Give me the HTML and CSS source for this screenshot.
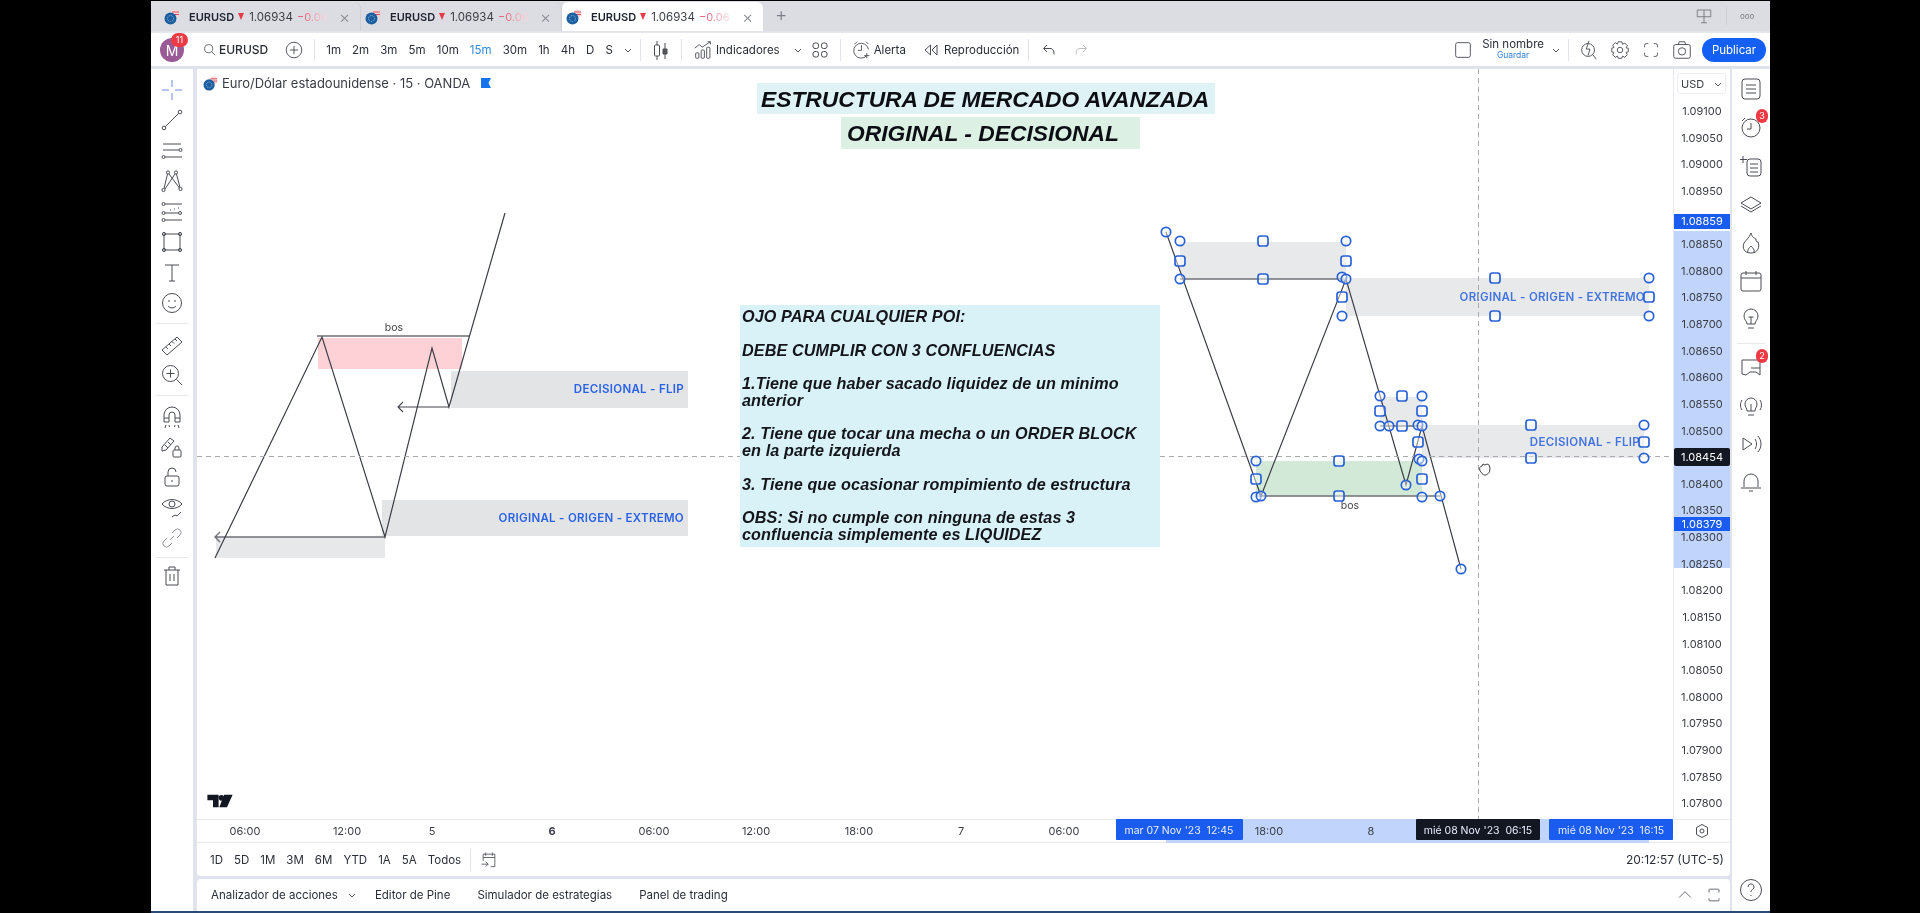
FILE: index.html
```html
<!DOCTYPE html>
<html lang="es">
<head>
    <meta charset="UTF-8">
    <title>EURUSD 1.06934 - TradingView</title>
    <link rel="stylesheet" href="styles.css">
</head>
<body>
<div class="app">
    <!-- Pestañas -->
    <div class="tabbar">
        <div class="tab">
            <svg class="flag" viewBox="0 0 16 16"><circle cx="11.5" cy="4.5" r="4" fill="#f3d5d8"/><path d="M8 3h7M8 5.5h7" stroke="#e0525e"/><circle cx="6.5" cy="9.5" r="6" fill="#1d5f9e"/><circle cx="6.5" cy="9.5" r="3" fill="none" stroke="#8fc0e8" stroke-dasharray="1 1"/></svg>
            <b>EURUSD</b><i class="down"></i><span class="tab-price">1.06934</span><span class="tab-change">−0.06</span>
            <span class="tab-close">×</span>
        </div>
        <div class="tab">
            <svg class="flag" viewBox="0 0 16 16"><circle cx="11.5" cy="4.5" r="4" fill="#f3d5d8"/><path d="M8 3h7M8 5.5h7" stroke="#e0525e"/><circle cx="6.5" cy="9.5" r="6" fill="#1d5f9e"/><circle cx="6.5" cy="9.5" r="3" fill="none" stroke="#8fc0e8" stroke-dasharray="1 1"/></svg>
            <b>EURUSD</b><i class="down"></i><span class="tab-price">1.06934</span><span class="tab-change">−0.06</span>
            <span class="tab-close">×</span>
        </div>
        <div class="tab active">
            <svg class="flag" viewBox="0 0 16 16"><circle cx="11.5" cy="4.5" r="4" fill="#f3d5d8"/><path d="M8 3h7M8 5.5h7" stroke="#e0525e"/><circle cx="6.5" cy="9.5" r="6" fill="#1d5f9e"/><circle cx="6.5" cy="9.5" r="3" fill="none" stroke="#8fc0e8" stroke-dasharray="1 1"/></svg>
            <b>EURUSD</b><i class="down"></i><span class="tab-price">1.06934</span><span class="tab-change">−0.06</span>
            <span class="tab-close">×</span>
        </div>
        <span class="tab-add">+</span>
        <div class="tabbar-right">
            <svg class="ico" viewBox="0 0 24 24"><path d="M3 4h18v9H3zM12 4v17M8 21h8"/></svg>
            <span class="tab-sep"></span>
            <span class="tab-more">ooo</span>
        </div>
    </div>

    <!-- Barra superior -->
    <div class="topbar">
        <div class="avatar">M<span class="avatar-badge">11</span></div>
        <div class="symbol">
            <svg class="ico-sm" viewBox="0 0 16 16"><circle cx="7" cy="7" r="5"/><path d="M10.5 10.5 15 15"/></svg>
            <span>EURUSD</span>
        </div>
        <svg class="ico add-symbol" viewBox="0 0 24 24"><circle cx="12" cy="12" r="8.5"/><path d="M12 7.5v9M7.5 12h9"/></svg>
        <span class="vsep first-sep"></span>
        <div class="intervals">
            <span>1m</span><span>2m</span><span>3m</span><span>5m</span><span>10m</span><span class="current">15m</span><span>30m</span><span>1h</span><span>4h</span><span>D</span><span>S</span>
            <svg class="chev" viewBox="0 0 8 8"><path d="M1 3l3 3 3-3"/></svg>
        </div>
        <span class="vsep"></span>
        <svg class="ico candle" viewBox="0 0 24 24"><path d="M8 3v4M8 18v4M16 5v6M16 16v5"/><rect x="5.5" y="7" width="5" height="11" rx="1"/><path d="M14 11h4v5h-4z" fill="#555"/></svg>
        <span class="vsep"></span>
        <div class="tool indicators">
            <svg class="ico" viewBox="0 0 24 24"><path d="M3 10l5-4 3 3 9-6M17 3h3v3"/><rect x="4" y="15" width="3.5" height="6" rx="1"/><rect x="10" y="12" width="3.5" height="9" rx="1"/><rect x="16" y="9" width="3.5" height="12" rx="1"/></svg>
            <span>Indicadores</span>
            <svg class="chev" viewBox="0 0 8 8"><path d="M1 3l3 3 3-3"/></svg>
        </div>
        <svg class="ico layouts" viewBox="0 0 24 24"><rect x="5" y="5" width="5.5" height="5.5" rx="2"/><rect x="13.5" y="5" width="5.5" height="5.5" rx="2"/><rect x="5" y="13.5" width="5.5" height="5.5" rx="2"/><rect x="13.5" y="13.5" width="5.5" height="5.5" rx="2"/></svg>
        <span class="vsep"></span>
        <div class="tool alert">
            <svg class="ico" viewBox="0 0 24 24"><path d="M18 19A8.5 8.5 0 1 1 20 12M12 7v6H8M4 6l3-3M20 6l-3-3M18 16v6M15 19h6"/></svg>
            <span>Alerta</span>
        </div>
        <div class="tool replay">
            <svg class="ico-sm" viewBox="0 0 16 16"><path d="M7.5 3 2 8l5.500 5zM14 3 9 8l5 5z"/></svg>
            <span>Reproducción</span>
        </div>
        <span class="vsep"></span>
        <svg class="ico-sm undo" viewBox="0 0 16 16"><path d="M6 3 2.500 6.500 6 10M3 6.500h6c3 0 4 2 4 6"/></svg>
        <svg class="ico-sm redo" viewBox="0 0 16 16"><path d="M10 3l3.500 3.500L10 10M13 6.500H7c-3 0-4 2-4 6"/></svg>

        <div class="topbar-right">
            <svg class="ico layout-box" viewBox="0 0 24 24"><rect x="4" y="4" width="16" height="16" rx="2"/></svg>
            <div class="layout-name">
                <span>Sin nombre</span>
                <small>Guardar</small>
            </div>
            <svg class="chev" viewBox="0 0 8 8"><path d="M1 3l3 3 3-3"/></svg>
            <span class="vsep"></span>
            <svg class="ico" viewBox="0 0 24 24"><circle cx="11" cy="12" r="7"/><path d="M16 17l4 5M12 2l-3 9h4l-2 7"/></svg>
            <svg class="ico" viewBox="0 0 24 24"><circle cx="12" cy="12" r="3"/><path d="M10 3h4l.7 2.800 2.500-1.400 2.800 2.800-1.400 2.500L21 10v4l-2.400.7 1.400 2.500-2.800 2.800-2.500-1.400L14 21h-4l-.7-2.400-2.500 1.400L4 17.200l1.400-2.500L3 14v-4l2.400-.7L4 6.800 6.800 4l2.500 1.400z"/></svg>
            <svg class="ico" viewBox="0 0 24 24"><path d="M5 9V7a2 2 0 0 1 2-2h2M15 5h2a2 2 0 0 1 2 2v2M19 15v2a2 2 0 0 1-2 2h-2M9 19H7a2 2 0 0 1-2-2v-2"/></svg>
            <svg class="ico" viewBox="0 0 24 24"><rect x="3" y="6" width="18" height="15" rx="2"/><circle cx="12" cy="13.500" r="4"/><path d="M8 6l1-3h6l1 3"/></svg>
            <button class="publish">Publicar</button>
        </div>
    </div>

    <div class="main">
        <!-- Herramientas de dibujo -->
        <div class="left-tools">
            <svg class="ico cross" viewBox="0 0 24 24"><path d="M12 2v7M12 15v7M2 12h7M15 12h7"/></svg>
            <svg class="ico" viewBox="0 0 24 24"><circle cx="4" cy="20" r="1.800"/><circle cx="20" cy="4" r="1.800"/><path d="M5.300 18.700 18.700 5.300"/></svg>
            <svg class="ico" viewBox="0 0 24 24"><path d="M3 5h18M3 11h16M5 18h17"/><circle cx="20.500" cy="11" r="1.500"/><circle cx="3.500" cy="18" r="1.500"/></svg>
            <svg class="ico" viewBox="0 0 24 24"><circle cx="3.500" cy="21" r="1.600"/><circle cx="8" cy="3.500" r="1.600"/><circle cx="16" cy="3.500" r="1.600"/><circle cx="20.500" cy="20" r="1.600"/><path d="M4 19.500 7.500 5M9 5l10.500 14M15 5 5 20M16.500 5 20 18.500"/></svg>
            <svg class="ico" viewBox="0 0 24 24"><circle cx="3.500" cy="4" r="1.500"/><circle cx="3.500" cy="13" r="1.500"/><circle cx="3.500" cy="20" r="1.500"/><circle cx="20" cy="13" r="1.500"/><path d="M5 4h17M5 13h13.500M5 20h17M10 10h1M14 9h1M18 8h1"/></svg>
            <svg class="ico" viewBox="0 0 24 24"><rect x="4" y="4" width="16" height="16"/><circle cx="4" cy="4" r="1.600"/><circle cx="20" cy="4" r="1.600"/><circle cx="4" cy="20" r="1.600"/><circle cx="20" cy="20" r="1.600"/></svg>
            <svg class="ico" viewBox="0 0 24 24"><path d="M5 5h14M12 5v16M9 21h6"/></svg>
            <svg class="ico" viewBox="0 0 24 24"><circle cx="12" cy="12" r="9.500"/><path d="M8 15c2 2.500 6 2.500 8 0M9 9v2M15 9v2"/></svg>
            <span class="hsep"></span>
            <svg class="ico" viewBox="0 0 24 24"><path d="M2 17 17 4l5 5L7 22zM6 14l2 2M9 11l2 2M12 8.500l2 2M15 6l2 2"/></svg>
            <svg class="ico" viewBox="0 0 24 24"><circle cx="10.500" cy="10.500" r="8"/><path d="M10.500 6.500v8M6.500 10.500h8M16.500 16.500 22 22"/></svg>
            <span class="hsep"></span>
            <svg class="ico" viewBox="0 0 24 24"><path d="M4 17V10a8 8 0 0 1 16 0v7h-5v-7a3 3 0 0 0-6 0v7zM4 13h5M15 13h5M6 20l-1 3M18 20l1 3M9 20l.5 2M15 20l-.5 2"/></svg>
            <svg class="ico" viewBox="0 0 24 24"><path d="M2 12 10 3l4 3-8 9-4 1zM5 10l3 3M8 7l3 3"/><rect x="13" y="15" width="8" height="7" rx="1"/><path d="M15 15v-2a2 2 0 0 1 4 0v2"/></svg>
            <svg class="ico" viewBox="0 0 24 24"><rect x="5" y="11" width="14" height="10" rx="2"/><path d="M8 11V7a4 4 0 0 1 8 0M12 15v2"/></svg>
            <svg class="ico" viewBox="0 0 24 24"><path d="M2 8c5-6 15-6 20 0-5 6-15 6-20 0z"/><circle cx="12" cy="8" r="3"/><path d="M12 21l3-2 2 1 3-3M21 16l-2 2"/></svg>
            <svg class="ico muted" viewBox="0 0 24 24"><path d="M10 14l4-4M7 12l-3 3a3.500 3.500 0 0 0 5 5l3-3M12 7l3-3a3.500 3.500 0 0 1 5 5l-3 3"/></svg>
            <span class="hsep last-sep"></span>
            <svg class="ico" viewBox="0 0 24 24"><path d="M4 6h16M9 6V3h6v3M6 6v15h12V6M10 10v7M14 10v7"/></svg>
        </div>

        <div class="center">
            <div class="chart-panel">
                <div class="chart-row">
                    <div class="chart">
                        <svg class="drawing" viewBox="197 69 1476 750">
                            <!-- zonas izquierda -->
                            <rect x="318" y="338" width="144" height="31" fill="#fdd1d6"/>
                            <rect x="451" y="371" width="237" height="37" fill="#e3e4e6"/>
                            <rect x="382" y="500" width="306" height="36" fill="#e3e4e6"/>
                            <rect x="216" y="537" width="169" height="21" fill="#e7e8ea"/>
                            <path class="level" d="M317 336H470"/>
                            <path class="level" d="M215 537H385M220 532l-5 5 5 5"/>
                            <path class="level thin" d="M398 407H449M403 402l-5 5 5 5"/>
                            <polyline class="wave" points="215,558 322,337 385,537 432,348 449,407 505,213"/>
                            <text class="bos" x="394" y="331">bos</text>
                            <text class="zone-label" x="684" y="393">DECISIONAL - FLIP</text>
                            <text class="zone-label" x="684" y="522">ORIGINAL - ORIGEN - EXTREMO</text>

                            <!-- zonas derecha -->
                            <rect x="1180" y="242" width="166" height="37" fill="#e8e9eb"/>
                            <rect x="1346" y="278" width="303" height="38" fill="#e8e9eb"/>
                            <rect x="1380" y="397" width="42" height="29" fill="#e8e9eb"/>
                            <rect x="1422" y="425" width="222" height="33" fill="#e8e9eb"/>
                            <rect x="1256" y="461" width="166" height="35" fill="#d1e9d6"/>
                            <path class="level" d="M1180 279H1346M1380 426H1422M1256 496H1440"/>
                            <polyline class="wave" points="1166,232 1261,496 1346,279 1406,485 1422,426 1461,569"/>
                            <text class="bos" x="1350" y="509">bos</text>
                            <text class="zone-label soft" x="1645" y="301">ORIGINAL - ORIGEN - EXTREMO</text>
                            <text class="zone-label soft" x="1640" y="446">DECISIONAL - FLIP</text>

                            <!-- cruz -->
                            <path class="crosshair" d="M197 456.500H1673M1478.500 69V819"/>

                            <!-- puntos de anclaje -->
                            <g class="handles">
                                <circle cx="1166" cy="232" r="4.700"/><circle cx="1180" cy="241" r="4.700"/><circle cx="1346" cy="241" r="4.700"/>
                                <circle cx="1180" cy="279" r="4.700"/><circle cx="1342" cy="277" r="4.700"/><circle cx="1346" cy="279" r="4.700"/>
                                <circle cx="1342" cy="316" r="4.700"/><circle cx="1649" cy="278" r="4.700"/><circle cx="1649" cy="316" r="4.700"/>
                                <circle cx="1380" cy="396" r="4.700"/><circle cx="1422" cy="396" r="4.700"/><circle cx="1380" cy="426" r="4.700"/>
                                <circle cx="1389" cy="426" r="4.700"/><circle cx="1418" cy="425" r="4.700"/><circle cx="1422" cy="426" r="4.700"/>
                                <circle cx="1644" cy="425" r="4.700"/><circle cx="1644" cy="458" r="4.700"/><circle cx="1419" cy="459" r="4.700"/>
                                <circle cx="1422" cy="461" r="4.700"/><circle cx="1256" cy="461" r="4.700"/><circle cx="1256" cy="497" r="4.700"/>
                                <circle cx="1261" cy="496" r="4.700"/><circle cx="1406" cy="485" r="4.700"/><circle cx="1422" cy="497" r="4.700"/>
                                <circle cx="1440" cy="496" r="4.700"/><circle cx="1461" cy="569" r="4.700"/>
                                <rect x="1258" y="236" width="10" height="10" rx="2.500"/><rect x="1175" y="256" width="10" height="10" rx="2.500"/>
                                <rect x="1341" y="256" width="10" height="10" rx="2.500"/><rect x="1258" y="274" width="10" height="10" rx="2.500"/>
                                <rect x="1490" y="273" width="10" height="10" rx="2.500"/><rect x="1337" y="292" width="10" height="10" rx="2.500"/>
                                <rect x="1644" y="292" width="10" height="10" rx="2.500"/><rect x="1490" y="311" width="10" height="10" rx="2.500"/>
                                <rect x="1397" y="391" width="10" height="10" rx="2.500"/><rect x="1375" y="406" width="10" height="10" rx="2.500"/>
                                <rect x="1417" y="406" width="10" height="10" rx="2.500"/><rect x="1397" y="421" width="10" height="10" rx="2.500"/>
                                <rect x="1526" y="420" width="10" height="10" rx="2.500"/><rect x="1413" y="437" width="10" height="10" rx="2.500"/>
                                <rect x="1639" y="437" width="10" height="10" rx="2.500"/><rect x="1526" y="453" width="10" height="10" rx="2.500"/>
                                <rect x="1334" y="456" width="10" height="10" rx="2.500"/><rect x="1251" y="474" width="10" height="10" rx="2.500"/>
                                <rect x="1417" y="474" width="10" height="10" rx="2.500"/><rect x="1334" y="491" width="10" height="10" rx="2.500"/>
                            </g>
                            <path class="hand" d="M1480 471c-1-3 0-5 2-5l1-2 2 1 2-1 2 1 1 3-.5 4-3 3h-3z"/>
                        </svg>

                        <div class="legend">
                            <svg class="flag" viewBox="0 0 16 16"><circle cx="11.500" cy="4.500" r="4" fill="#f3d5d8"/><path d="M8 3h7M8 5.500h7" stroke="#e0525e"/><circle cx="6.500" cy="9.500" r="6" fill="#1d5f9e"/><circle cx="6.500" cy="9.500" r="3" fill="none" stroke="#8fc0e8" stroke-dasharray="1 1"/></svg>
                            <span>Euro/Dólar estadounidense · 15 · OANDA</span>
                            <svg class="legend-flag" viewBox="0 0 10 10"><path d="M0 0h10L7.500 5 10 10H0z"/></svg>
                        </div>

                        <div class="title title-main">ESTRUCTURA DE MERCADO AVANZADA</div>
                        <div class="title title-sub">ORIGINAL - DECISIONAL</div>

                        <div class="note">
                            <p>OJO PARA CUALQUIER POI:</p>
                            <p>DEBE CUMPLIR CON 3 CONFLUENCIAS</p>
                            <p>1.Tiene que haber sacado liquidez de un minimo<br>anterior</p>
                            <p>2. Tiene que tocar una mecha o un ORDER BLOCK<br>en la parte izquierda</p>
                            <p>3. Tiene que ocasionar rompimiento de estructura</p>
                            <p>OBS: Si no cumple con ninguna de estas 3<br>confluencia simplemente es LIQUIDEZ</p>
                        </div>

                        <svg class="tv-logo" viewBox="0 0 36 20"><path d="M0 1h16v18H8V9H0zM24 1h12l-8 18H17z" fill="#131722"/><circle cx="20" cy="5.500" r="4" fill="#131722"/></svg>
                    </div>

                    <div class="price-axis">
                        <div class="currency">USD <svg class="chev" viewBox="0 0 8 8"><path d="M1 3l3 3 3-3"/></svg></div>
                        <div class="price-band"></div>
                        <span>1.09100</span><span>1.09050</span><span>1.09000</span><span>1.08950</span><span>1.08900</span>
                        <span>1.08850</span><span>1.08800</span><span>1.08750</span><span>1.08700</span><span>1.08650</span>
                        <span>1.08600</span><span>1.08550</span><span>1.08500</span><span>1.08450</span><span>1.08400</span>
                        <span>1.08350</span><span>1.08300</span><span>1.08250</span><span>1.08200</span><span>1.08150</span>
                        <span>1.08100</span><span>1.08050</span><span>1.08000</span><span>1.07950</span><span>1.07900</span>
                        <span>1.07850</span><span>1.07800</span>
                        <div class="price-tag tag-top">1.08859</div>
                        <div class="price-tag tag-cross">1.08454</div>
                        <div class="price-tag tag-bottom">1.08379</div>
                    </div>
                </div>

                <div class="time-row">
                    <svg class="time-axis" viewBox="197 0 1476 24">
                        <rect x="1116" y="0" width="557" height="21" fill="#c1d4fb"/>
                        <rect x="1166" y="21" width="483" height="3" fill="#c1d4fb"/>
                        <text x="245" y="16">06:00</text><text x="347" y="16">12:00</text><text x="432" y="16">5</text>
                        <text class="strong" x="552" y="16">6</text><text x="654" y="16">06:00</text><text x="756" y="16">12:00</text>
                        <text x="859" y="16">18:00</text><text x="961" y="16">7</text><text x="1064" y="16">06:00</text>
                        <text x="1269" y="16">18:00</text><text x="1371" y="16">8</text>
                        <rect x="1116" y="0" width="127" height="21" rx="1" fill="#1a5cf0"/>
                        <rect x="1416" y="0" width="124" height="21" rx="1" fill="#131722"/>
                        <rect x="1549" y="0" width="124" height="21" rx="1" fill="#1a5cf0"/>
                        <text class="on-dark" x="1179" y="15" xml:space="preserve">mar 07 Nov '23  12:45</text>
                        <text class="on-dark" x="1478" y="15" xml:space="preserve">mié 08 Nov '23  06:15</text>
                        <text class="on-dark" x="1611" y="15" xml:space="preserve">mié 08 Nov '23  16:15</text>
                    </svg>
                    <div class="axis-settings">
                        <svg class="ico-sm" viewBox="0 0 16 16"><path d="M8 1.500 13.500 4.500v7L8 14.500 2.500 11.500v-7z"/><circle cx="8" cy="8" r="2"/></svg>
                    </div>
                </div>

                <div class="range-row">
                    <div class="ranges">
                        <span>1D</span><span>5D</span><span>1M</span><span>3M</span><span>6M</span><span>YTD</span><span>1A</span><span>5A</span><span>Todos</span>
                    </div>
                    <span class="vsep"></span>
                    <svg class="ico goto" viewBox="0 0 24 24"><path d="M5 5h14v15h-5M5 5v8M5 9h14M8 3v4M16 3v4M3 17h8M8 14l3 3-3 3"/></svg>
                    <span class="clock">20:12:57 (UTC-5)</span>
                </div>
            </div>

            <div class="bottom-bar">
                <span>Analizador de acciones</span>
                <svg class="chev" viewBox="0 0 8 8"><path d="M1 3l3 3 3-3"/></svg>
                <span class="panel-link">Editor de Pine</span>
                <span class="panel-link">Simulador de estrategias</span>
                <span class="panel-link">Panel de trading</span>
                <div class="bottom-right">
                    <svg class="ico" viewBox="0 0 24 24"><path d="M5 15l7-7 7 7"/></svg>
                    <svg class="ico" viewBox="0 0 24 24"><path d="M6 9V6a1 1 0 0 1 1-1h10a1 1 0 0 1 1 1v3M18 16v2a1 1 0 0 1-1 1H7a1 1 0 0 1-1-1v-2"/></svg>
                </div>
            </div>
        </div>

        <!-- Barra derecha -->
        <div class="right-tools">
            <svg class="ico" viewBox="0 0 24 24"><rect x="3" y="2" width="18" height="20" rx="3"/><path d="M7 8h10M7 12h10M7 16h10"/></svg>
            <div class="badged">
                <svg class="ico" viewBox="0 0 24 24"><circle cx="12" cy="13" r="9"/><path d="M12 8v6H8M3 6l3-3M21 6l-3-3"/></svg>
                <span class="badge">3</span>
            </div>
            <svg class="ico" viewBox="0 0 24 24"><rect x="8" y="5" width="14" height="17" rx="3"/><path d="M11 10h8M11 14h8M11 18h8M4 2v7M1 5.500h7"/></svg>
            <svg class="ico" viewBox="0 0 24 24"><path d="M12 5l10 6-10 6L2 11zM2 14l10 6 10-6"/></svg>
            <svg class="ico" viewBox="0 0 24 24"><path d="M12 2c1 4 3 5 5 6 0 2 0 3 2 3 2 5 0 11-7 11S3 17 5 12c2-3 5-5 7-10zM9 22c-1-3 1-5 3-7 2 2 4 4 3 7"/></svg>
            <svg class="ico" viewBox="0 0 24 24"><rect x="2" y="4" width="20" height="18" rx="2"/><path d="M2 9h20M7 2v4M17 2v4"/></svg>
            <svg class="ico" viewBox="0 0 24 24"><path d="M8 17c0-3-3-4-3-8a7 7 0 0 1 14 0c0 4-3 5-3 8zM9 21h6M9.500 10h5M12 10v7"/></svg>
            <span class="hsep right-sep"></span>
            <div class="badged">
                <svg class="ico" viewBox="0 0 24 24"><path d="M3 5h18v15l-4-3H11l-4 3-4-1zM12 13h9"/></svg>
                <span class="badge">2</span>
            </div>
            <svg class="ico" viewBox="0 0 24 24"><path d="M8 17c0-3-2-4-2-7a6 6 0 0 1 12 0c0 3-2 4-2 7zM9 21h6M12 10v7M3 6c-2 3-2 7 0 10M21 6c2 3 2 7 0 10"/></svg>
            <svg class="ico" viewBox="0 0 24 24"><path d="M4 6l9 6-9 6zM16 7c2 3 2 7 0 10M19 4c4 5 4 11 0 16"/></svg>
            <svg class="ico" viewBox="0 0 24 24"><path d="M5 17V11a7 7 0 0 1 14 0v6M2 18h20M10 21h4"/></svg>
            <svg class="ico help" viewBox="0 0 24 24"><circle cx="12" cy="12" r="10.500"/><path d="M9 9a3 3 0 1 1 4.500 2.500c-1 .7-1.500 1.300-1.500 2.500M12 17v1"/></svg>
        </div>
    </div>
</div>
</body>
</html>
```

FILE: styles.css
```css
* {
    box-sizing: border-box;
}
html, body {
    margin: 0;
    height: 100%;
    background: #000;
    overflow: hidden;
}
body {
    font-family: Inter, "Liberation Sans", sans-serif;
    font-size: 12px;
    color: #2a2e39;
}
.app {
    width: 1619px;
    height: 913px;
    margin-left: 151px;
    display: flex;
    flex-direction: column;
    background: #e0e3eb;
    border-top: 1px solid #000;
    border-bottom: 2px solid #2c4a78;
    filter: blur(0.35px);
}
svg {
    display: block;
    flex: none;
}
.ico, .ico-sm, .chev {
    fill: none;
    stroke: #4a4d55;
    stroke-width: 1;
}
.ico {
    width: 24px;
    height: 24px;
}
.ico-sm {
    width: 16px;
    height: 16px;
}
.chev {
    width: 8px;
    height: 8px;
    stroke: #555;
}
.flag {
    width: 16px;
    height: 16px;
}

/* tabs */
.tabbar {
    height: 30px;
    flex: none;
    display: flex;
    align-items: flex-end;
    padding-left: 9px;
    background: #dcdde3;
    font-size: 11px;
}
.tab {
    width: 201px;
    height: 29px;
    display: flex;
    align-items: center;
    padding-left: 4px;
    position: relative;
    border-right: 1px solid #cfd0d6;
    border-radius: 6px 6px 0 0;
}
.tab .flag {
    margin-right: 9px;
}
.tab b {
    font-weight: 600;
    color: #1f2330;
}
.tab.active {
    background: #fff;
    border-right: none;
}
.down {
    width: 0;
    height: 0;
    margin: 0 5px 0 4px;
    border-left: 3.500px solid transparent;
    border-right: 3.500px solid transparent;
    border-top: 7px solid #e8394a;
}
.tab-price {
    font-size: 11.500px;
    color: #3a3d45;
}
.tab-change {
    margin-left: 4px;
    white-space: nowrap;
    color: transparent;
    background: linear-gradient(90deg, #e8566a 20%, #f8d4da 90%);
    -webkit-background-clip: text;
    background-clip: text;
}
.tab-close {
    margin-left: auto;
    margin-right: 10px;
    font-size: 17px;
    font-weight: 300;
    color: #8a8d96;
}
.tab-add {
    margin: 0 0 5px 12px;
    font-size: 19px;
    font-weight: 300;
    color: #7b7e88;
}
.tabbar-right {
    margin-left: auto;
    display: flex;
    align-items: center;
    height: 30px;
}
.tabbar-right .ico {
    width: 18px;
    height: 18px;
    stroke: #666;
}
.tab-sep {
    width: 1px;
    height: 18px;
    margin: 0 13px;
    background: #cfd0d6;
}
.tab-more {
    width: 30px;
    font-size: 8px;
    color: #777;
}

/* top toolbar */
.topbar {
    height: 33px;
    flex: none;
    margin: 2px 0 3px;
    padding-left: 9px;
    display: flex;
    align-items: center;
    background: #fff;
    box-shadow: 0 -1px 0 #e6e7ec;
    font-size: 11.500px;
}
.avatar {
    width: 24px;
    height: 24px;
    flex: none;
    position: relative;
    border-radius: 50%;
    background: #9a5a96;
    color: #fff;
    font-size: 14px;
    line-height: 26px;
    text-align: center;
}
.avatar-badge {
    position: absolute;
    top: -5px;
    left: 11px;
    width: 17px;
    height: 14px;
    border-radius: 7px;
    background: #ee3a45;
    font-size: 9px;
    line-height: 14px;
}
.symbol {
    display: flex;
    align-items: center;
    gap: 3px;
    margin-left: 19px;
    font-size: 12px;
    font-weight: 500;
}
.symbol .ico-sm {
    width: 13px;
    height: 13px;
}
.add-symbol {
    margin-left: 15px;
    width: 22px;
    height: 22px;
}
.vsep {
    width: 1px;
    height: 22px;
    flex: none;
    background: #e0e3eb;
}
.first-sep {
    margin-left: 9px;
}
.intervals {
    display: flex;
    align-items: center;
    gap: 11.100px;
    margin: 0 8px 0 11px;
}
.intervals .current {
    color: #2f8ae0;
}
.candle {
    margin: 0 8px;
}
.tool {
    display: flex;
    align-items: center;
}
.indicators {
    margin-left: 10px;
    gap: 2px;
}
.indicators .ico {
    width: 22px;
    height: 22px;
}
.indicators .chev {
    margin-left: 12px;
}
.layouts {
    margin: 0 8px 0 6px;
}
.alert {
    gap: 2px;
    margin-left: 10px;
}
.alert .ico {
    width: 21px;
    height: 21px;
}
.replay {
    gap: 5px;
    margin: 0 9px 0 17px;
}
.undo {
    margin-left: 12px;
}
.redo {
    margin-left: 16px;
    opacity: 0.35;
}
.topbar-right {
    margin-left: auto;
    display: flex;
    align-items: center;
    gap: 8px;
    padding-right: 4px;
}
.topbar-right .ico {
    width: 22px;
    height: 22px;
    margin-left: 1px;
}
.layout-box {
    margin-right: 0;
}
.layout-name {
    display: flex;
    flex-direction: column;
    align-items: center;
    line-height: 11px;
    font-size: 11.500px;
}
.layout-name small {
    font-size: 8.500px;
    color: #2f7fe0;
}
.publish {
    width: 64px;
    height: 24px;
    margin-left: 1px;
    border: none;
    border-radius: 12px;
    background: #1460f5;
    color: #fff;
    font-family: inherit;
    font-size: 11.500px;
}

/* layout */
.main {
    flex: 1;
    min-height: 0;
    display: flex;
}
.left-tools {
    width: 42px;
    flex: none;
    margin-right: 4px;
    padding-top: 9px;
    display: flex;
    flex-direction: column;
    align-items: center;
    gap: 6.400px;
    background: #fff;
}
.left-tools .cross {
    stroke: #6f86e6;
}
.left-tools .muted {
    opacity: 0.6;
}
.hsep {
    width: 32px;
    height: 1px;
    margin: 2px 0;
    background: #e8e9ee;
}
.left-tools .last-sep {
    margin: 0;
}
.center {
    width: 1533px;
    flex: none;
    display: flex;
    flex-direction: column;
    gap: 3px;
}
.chart-panel {
    height: 807px;
    flex: none;
    display: flex;
    flex-direction: column;
    background: #fff;
    border-radius: 0 0 4px 4px;
}
.chart-row {
    height: 750px;
    flex: none;
    display: flex;
}
.chart {
    width: 1476px;
    flex: none;
    position: relative;
    overflow: hidden;
    border-radius: 4px 0 0 0;
}
.drawing {
    position: absolute;
    top: 0;
    left: 0;
    width: 1476px;
    height: 750px;
}

/* drawing */
.wave {
    fill: none;
    stroke: #3b3e46;
    stroke-width: 1.200;
}
.level {
    fill: none;
    stroke: #6e7177;
    stroke-width: 1.400;
}
.level.thin {
    stroke: #44474e;
    stroke-width: 1.100;
}
.bos {
    font-size: 10.500px;
    fill: #444;
    text-anchor: middle;
}
.zone-label {
    font-size: 11.500px;
    font-weight: 600;
    letter-spacing: 0.300px;
    fill: #2962e8;
    text-anchor: end;
}
.zone-label.soft {
    fill: #4474e0;
}
.crosshair {
    fill: none;
    stroke: #a8aaae;
    stroke-width: 1;
    stroke-dasharray: 5 4;
}
.handles circle, .handles rect {
    fill: rgba(255, 255, 255, 0.45);
    stroke: #2a62d6;
    stroke-width: 1.700;
}
.hand {
    fill: #fff;
    stroke: #444;
    stroke-width: 1;
}
.legend {
    position: absolute;
    top: 6px;
    left: 6px;
    display: flex;
    align-items: center;
    gap: 4px;
    font-size: 13px;
    color: #3a3d45;
}
.legend .flag {
    width: 15px;
    height: 15px;
}
.legend-flag {
    width: 10px;
    height: 10px;
    margin-left: 7px;
    fill: #1673f0;
}
.title {
    position: absolute;
    display: flex;
    align-items: center;
    padding-top: 1px;
    font-family: "Liberation Sans", Arial, sans-serif;
    font-weight: bold;
    font-style: italic;
    font-size: 22.800px;
    color: #0c0e14;
}
.title-main {
    left: 560px;
    top: 14px;
    width: 458px;
    height: 31px;
    padding-left: 4px;
    background: #dff3f7;
}
.title-sub {
    left: 644px;
    top: 48px;
    width: 299px;
    height: 32px;
    padding-left: 6px;
    background: #dcf0e4;
}
.note {
    position: absolute;
    left: 543px;
    top: 236px;
    width: 420px;
    height: 242px;
    padding: 3px 2px 0;
    background: #d9f2f7;
    font-family: "Liberation Sans", Arial, sans-serif;
    font-weight: bold;
    font-style: italic;
    font-size: 16.200px;
    line-height: 16.750px;
    letter-spacing: 0.100px;
    color: #14161c;
}
.note p {
    margin: 0 0 16.750px;
}
.tv-logo {
    position: absolute;
    left: 10px;
    bottom: 11px;
    width: 26px;
    height: 14px;
}

/* price axis */
.price-axis {
    width: 57px;
    flex: none;
    position: relative;
    padding-top: 29px;
    display: flex;
    flex-direction: column;
    align-items: center;
    font-size: 11px;
    border-left: 1px solid #e8e9ee;
    color: #3a3d45;
}
.price-axis > span {
    height: 26.630px;
    flex: none;
    line-height: 26.630px;
    position: relative;
}
.price-band {
    position: absolute;
    top: 162px;
    left: 0;
    right: 0;
    height: 337px;
    background: #c1d4fb;
}
.currency {
    position: absolute;
    top: 4px;
    left: 3px;
    width: 49px;
    height: 21px;
    display: flex;
    align-items: center;
    justify-content: space-between;
    padding: 0 3px;
    border: 1px solid #eceef2;
    border-radius: 3px;
}
.price-tag {
    position: absolute;
    left: 0;
    right: 0;
    text-align: center;
    color: #fff;
    background: #1a5cf0;
}
.tag-top {
    top: 145px;
    height: 15px;
    line-height: 15px;
}
.tag-cross {
    top: 379px;
    height: 18px;
    line-height: 18px;
    background: #131722;
    border-radius: 2px;
}
.tag-bottom {
    top: 448px;
    height: 14px;
    line-height: 14px;
}

/* time axis */
.time-row {
    height: 24px;
    flex: none;
    display: flex;
    border-top: 1px solid #e8e9ee;
    border-bottom: 1px solid #e8e9ee;
}
.time-axis {
    width: 1476px;
    height: 24px;
    margin-top: -1px;
}
.time-axis text {
    font-size: 11px;
    fill: #3a3d45;
    text-anchor: middle;
}
.time-axis .strong {
    font-weight: 700;
}
.time-axis .on-dark {
    font-size: 10.500px;
    fill: #e8eeff;
}
.axis-settings {
    flex: 1;
    display: flex;
    align-items: center;
    justify-content: center;
}

/* range row */
.range-row {
    flex: 1;
    display: flex;
    align-items: center;
    padding-left: 13px;
    padding-right: 6px;
}
.ranges {
    display: flex;
    gap: 11px;
    font-size: 11.500px;
}
.range-row .vsep {
    margin: 0 8px 0 9px;
}
.goto {
    width: 20px;
    height: 20px;
}
.clock {
    margin-left: auto;
    font-size: 12px;
}

/* bottom bar */
.bottom-bar {
    flex: 1;
    display: flex;
    align-items: center;
    padding-left: 14px;
    background: #fff;
    border-radius: 4px 4px 0 0;
    font-size: 11.500px;
}
.bottom-bar .chev {
    margin-left: 10px;
}
.panel-link {
    margin-left: 27px;
}
.chev + .panel-link {
    margin-left: 19px;
}
.bottom-right {
    margin-left: auto;
    margin-right: 6px;
    display: flex;
    gap: 9px;
}
.bottom-right .ico {
    width: 20px;
    height: 20px;
}

/* right toolbar */
.right-tools {
    flex: 1;
    margin-left: 2px;
    position: relative;
    padding-top: 8px;
    display: flex;
    flex-direction: column;
    align-items: center;
    gap: 14.400px;
    background: #fff;
}
.badged {
    position: relative;
    height: 24px;
}
.badge {
    position: absolute;
    top: -6px;
    right: -5px;
    width: 12px;
    height: 14px;
    border-radius: 7px;
    background: #ee3a45;
    color: #fff;
    font-size: 9px;
    line-height: 14px;
    text-align: center;
}
.right-sep {
    width: 28px;
    margin: -3px 0;
}
.help {
    position: absolute;
    left: 7px;
    bottom: 9px;
}
```
